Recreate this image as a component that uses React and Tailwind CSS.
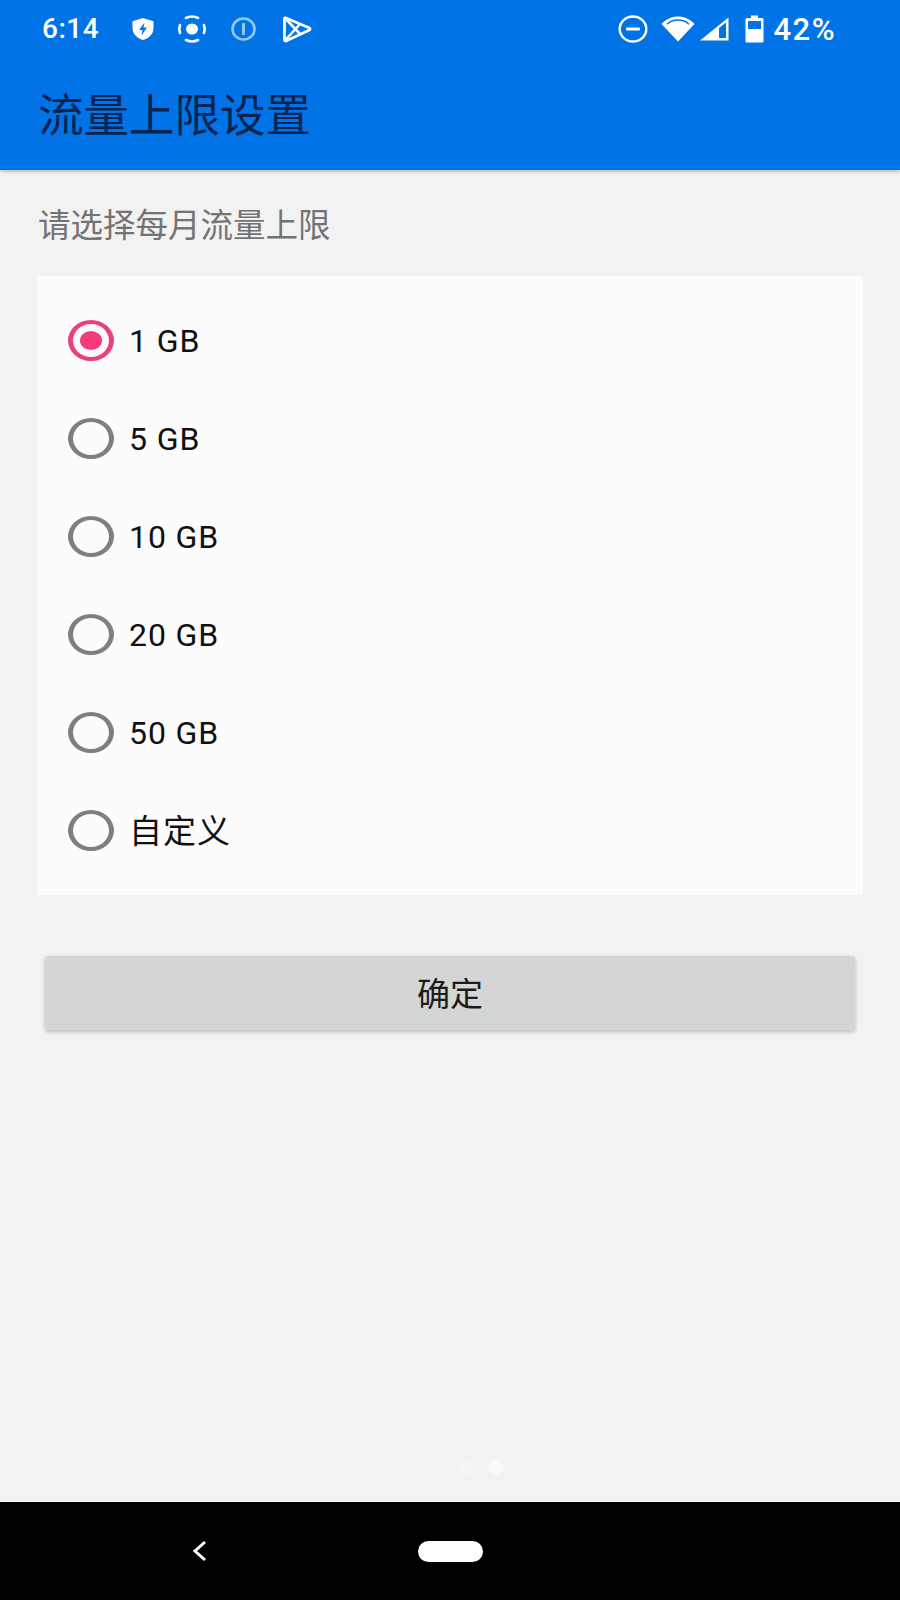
const CJK = "font-['Roboto','Noto_Sans_CJK_SC',sans-serif]";

const OPTIONS = ["1 GB", "5 GB", "10 GB", "20 GB", "50 GB", "自定义"];

function ShieldIcon() {
  return (
    <svg width="24" height="24" viewBox="0 0 24 26" preserveAspectRatio="none" className="ml-[29px]">
      <path d="M12 1 L22.5 4.5 V12 C22.5 18.5 18 23 12 25 C6 23 1.5 18.5 1.5 12 V4.5 Z" fill="white" />
      <path d="M13.5 6 L8 14 H11.5 L10.5 20 L16 11.5 H12.5 Z" fill="#0073e6" />
    </svg>
  );
}

function RecordIcon() {
  return (
    <svg width="30" height="28" viewBox="0 0 30 28" className="ml-[22px]" fill="none">
      <ellipse cx="15" cy="14" rx="6" ry="5.5" fill="white" />
      <path d="M3 18 A13 12 0 0 1 3 10" stroke="white" strokeWidth="2.6" strokeLinecap="round" />
      <path d="M27 10 A13 12 0 0 1 27 18" stroke="white" strokeWidth="2.6" strokeLinecap="round" />
      <path d="M9 3 A13 12 0 0 1 21 3" stroke="white" strokeWidth="2.6" strokeLinecap="round" />
      <path d="M21 25 A13 12 0 0 1 9 25" stroke="white" strokeWidth="2.6" strokeLinecap="round" />
    </svg>
  );
}

function InfoIcon() {
  return (
    <svg width="25" height="24" viewBox="0 0 25 24" className="ml-[24px]" fill="none" opacity="0.6">
      <ellipse cx="12.5" cy="12" rx="11" ry="10.5" stroke="white" strokeWidth="2.6" />
      <rect x="11" y="6" width="3" height="12" rx="1" fill="white" />
    </svg>
  );
}

function PlayIcon() {
  return (
    <svg width="29" height="28" viewBox="0 0 29 28" className="ml-[27px]" fill="none">
      <path
        d="M3 3 L26.5 13 Q27.5 14 26.5 15 L3 26 Q1.5 26 1.5 24.5 V3.5 Q1.5 2.5 3 3 Z"
        stroke="white"
        strokeWidth="2.8"
        strokeLinejoin="round"
      />
      <path d="M2 3 L17 19 M2 25.5 L17 9" stroke="white" strokeWidth="2.6" />
    </svg>
  );
}

function DndIcon() {
  return (
    <svg width="30" height="28" viewBox="0 0 30 28" fill="none">
      <ellipse cx="15" cy="14" rx="13.3" ry="12.5" stroke="white" strokeWidth="2.4" />
      <rect x="8" y="12.6" width="14" height="2.8" rx="1" fill="white" />
    </svg>
  );
}

function WifiIcon() {
  return (
    <svg width="34" height="26" viewBox="0 0 34 26" className="ml-[13px]">
      <path d="M0.5 8 C5 3 11 0.5 17 0.5 C23 0.5 29 3 33.5 8 L17 25.5 Z" fill="white" />
      <path d="M6 8.2 C9 5.5 13 4 17 4 C21 4 25 5.5 28 8.2" fill="none" stroke="#0073e6" strokeWidth="1.4" />
    </svg>
  );
}

function SignalIcon() {
  return (
    <svg width="29" height="24" viewBox="0 0 29 24" className="ml-[5px]">
      <path d="M0 23.5 L28.5 0.5 V23.5 Z" fill="white" />
      <path d="M19 11 L26 5.5 V21 H19 Z" fill="#0073e6" />
    </svg>
  );
}

function BatteryIcon() {
  return (
    <svg width="19" height="28" viewBox="0 0 19 28" className="ml-[16px]">
      <path d="M6 0.5 H13 V3 H17 Q18.5 3 18.5 4.5 V26 Q18.5 27.5 17 27.5 H2 Q0.5 27.5 0.5 26 V4.5 Q0.5 3 2 3 H6 Z" fill="white" />
      <rect x="3" y="6" width="13" height="8" fill="#0073e6" />
    </svg>
  );
}

function Radio({ checked }) {
  return (
    <span
      className={`flex h-[41px] w-[46px] shrink-0 items-center justify-center rounded-[50%] border-x-[5px] border-y-[4px] ${
        checked ? "border-[#ec407a]" : "border-[#7f7f7f]"
      }`}
    >
      {checked && <span className="h-[19px] w-[22px] rounded-[50%] bg-[#f73a7c]" />}
    </span>
  );
}

export default function App() {
  return (
    <div className={`flex h-[1600px] w-[900px] flex-col bg-[#f2f2f2] ${CJK}`}>
      {/* App bar with status bar */}
      <header className="z-10 h-[170px] bg-[#0073e6] shadow-[0_1px_4px_rgba(0,0,0,0.3)]">
        <div className="flex h-[58px] items-center pl-[42px] pr-[64px] text-white">
          <span className="w-[60px] text-[28px] font-medium leading-none tracking-[0.5px]">6:14</span>
          <ShieldIcon />
          <RecordIcon />
          <InfoIcon />
          <PlayIcon />
          <span className="flex-1" />
          <DndIcon />
          <WifiIcon />
          <SignalIcon />
          <BatteryIcon />
          <span className="ml-[9px] text-[31px] font-medium leading-none tracking-[1.5px]">42%</span>
        </div>
        <h1 className="pl-[38px] text-[45.5px] font-normal leading-[118px] text-[#0b2350]">流量上限设置</h1>
      </header>

      {/* Content */}
      <main className="flex flex-1 flex-col">
        <p className="pl-[38px] pt-[36px] text-[32.5px] leading-[40px] text-[#737373]">请选择每月流量上限</p>

        <div className="mx-[37px] mt-[30px] bg-[#fcfcfc] pb-[16px] pl-[31px] pt-[15px]">
          {OPTIONS.map((opt, i) => (
            <label key={opt} className="flex h-[98px] items-center gap-[15px]">
              <Radio checked={i === 0} />
              <span
                className={`pt-[2px] leading-none text-[#111] ${
                  i === 5 ? "text-[33px] tracking-[1px]" : "text-[32px] tracking-[0.9px]"
                }`}
              >
                {opt}
              </span>
            </label>
          ))}
        </div>

        <button className="mx-[45px] mt-[61px] h-[74px] rounded-[3px] bg-[#d4d6d6] pt-[3px] text-[33px] text-[#1c1c1c] shadow-[0_2px_4px_rgba(0,0,0,0.22)]">
          确定
        </button>

        {/* Page dots */}
        <div className="mb-[27px] mt-auto flex items-center pl-[397px]">
          <span className="h-[14px] w-[16px] rounded-full bg-[#f3f3f3]" />
          <span className="ml-[10px] h-[14px] w-[20px] rounded-full bg-[#f3f3f3]" />
          <span className="ml-[15px] h-[14px] w-[15px] rounded-full bg-[#f5f5f5]" />
          <span className="ml-[15px] h-[15px] w-[15px] rounded-full bg-[#fafafa]" />
        </div>
      </main>

      {/* Navigation bar */}
      <nav className="flex h-[98px] items-center bg-black pl-[192px]">
        <svg width="16" height="22" viewBox="0 0 16 22" fill="none">
          <path d="M13 2 L3 11 L13 20" stroke="white" strokeWidth="3" />
        </svg>
        <span className="ml-[210px] h-[21px] w-[65px] rounded-full bg-white" />
      </nav>
    </div>
  );
}
